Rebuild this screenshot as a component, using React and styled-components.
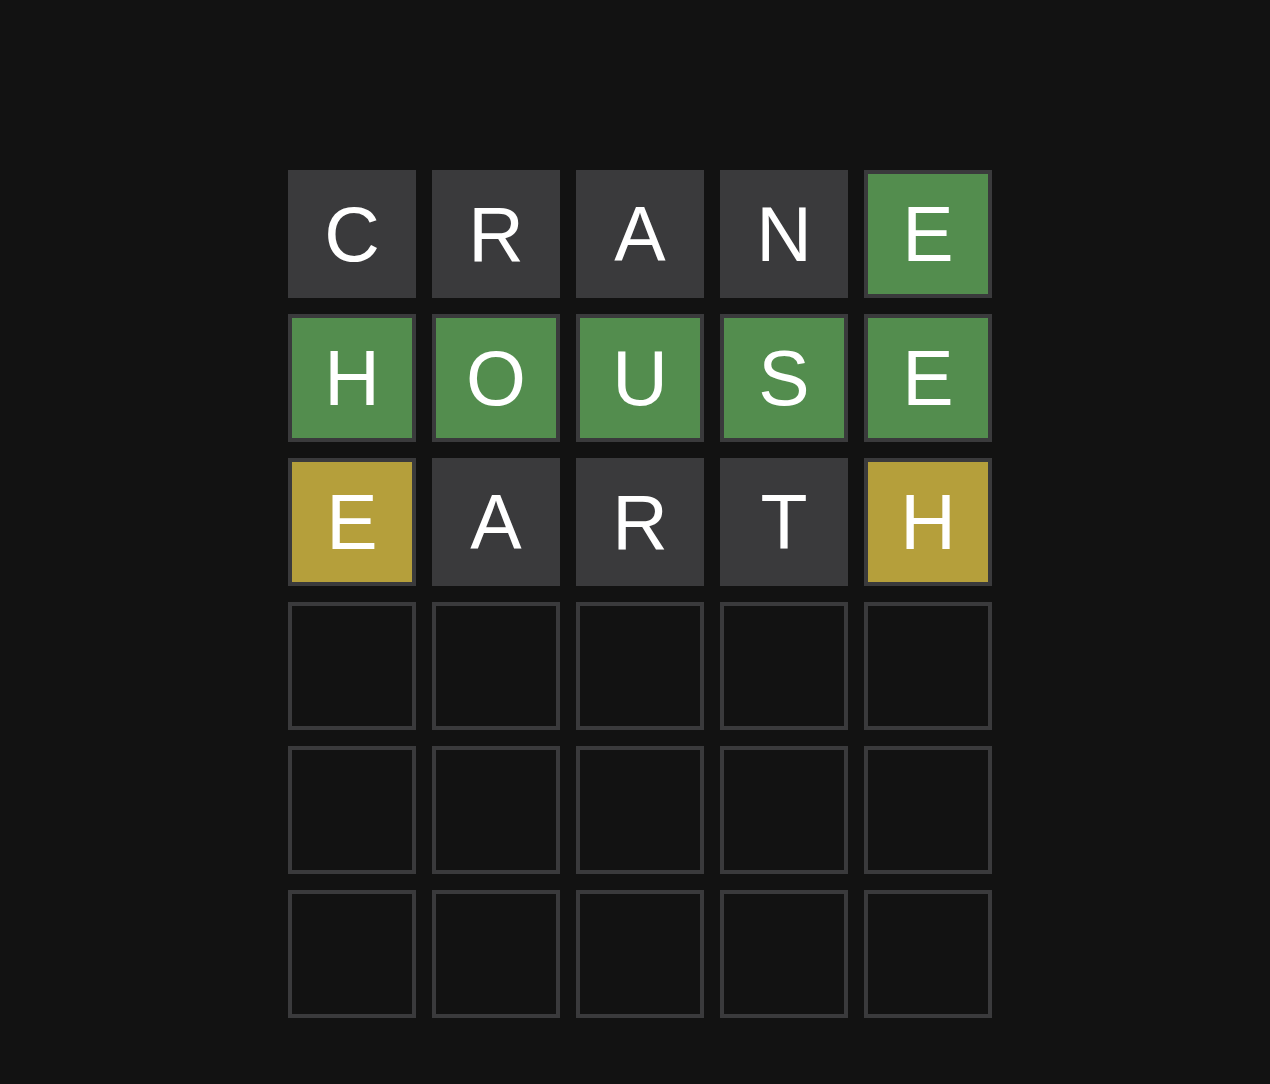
import styled, { createGlobalStyle } from "styled-components";

const GlobalStyle = createGlobalStyle`
  html, body {
    margin: 0;
    padding: 0;
    background: #121212;
  }
  body {
    font-family: "Liberation Sans", Arial, sans-serif;
    min-height: 1084px;
  }
`;

const rows = [
  [
    ["C", "absent"],
    ["R", "absent"],
    ["A", "absent"],
    ["N", "absent"],
    ["E", "correct"],
  ],
  [
    ["H", "correct"],
    ["O", "correct"],
    ["U", "correct"],
    ["S", "correct"],
    ["E", "correct"],
  ],
  [
    ["E", "present"],
    ["A", "absent"],
    ["R", "absent"],
    ["T", "absent"],
    ["H", "present"],
  ],
  [],
  [],
  [],
];

const fills = {
  absent: "#3a3a3c",
  correct: "#538d4e",
  present: "#b59f3b",
  empty: "#121212",
};

const App = () => {
  return (
    <>
      <GlobalStyle />
      <Page>
        <Board>
          {rows.map((row, r) =>
            [0, 1, 2, 3, 4].map((c) => {
              const cell = row[c];
              const state = cell ? cell[1] : "empty";
              return (
                <Tile key={`${r}-${c}`} $state={state}>
                  {cell ? cell[0] : ""}
                </Tile>
              );
            })
          )}
        </Board>
      </Page>
    </>
  );
};

export default App;

const Page = styled.main`
  display: flex;
  justify-content: center;
  padding: 170px 0 0 10px;
`;

const Board = styled.div`
  display: grid;
  grid-template-columns: repeat(5, 128px);
  grid-auto-rows: 128px;
  gap: 16px;
`;

const Tile = styled.div`
  box-sizing: border-box;
  display: flex;
  align-items: center;
  justify-content: center;
  border: 4px solid #3a3a3c;
  background: ${({ $state }) => fills[$state]};
  color: #ffffff;
  font-size: 77px;
  line-height: 1;
  text-transform: uppercase;
`;
